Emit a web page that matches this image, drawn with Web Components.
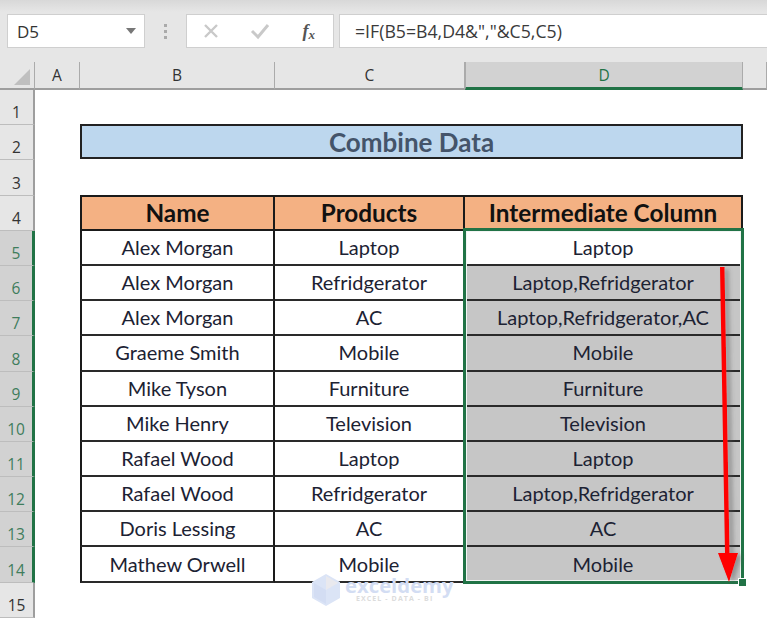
<!DOCTYPE html>
<html>
<head>
<meta charset="utf-8">
<style>
    html, body { margin: 0; padding: 0; background: #fff; }
    body { width: 767px; height: 621px; overflow: hidden; font-family: "Lato", "Liberation Sans", sans-serif; }
</style>
</head>
<body>
    <xl-app></xl-app>

    <template id="toolbarTpl">
        <style>
            :host { display: flex; height: 62px; box-sizing: border-box; padding: 14px 0 14px 7px; align-items: stretch;
                background: linear-gradient(#d8d8d8 0, #e6e6e6 12px); font-family: "Open Sans", "Liberation Sans", sans-serif; color: #333; }
            .box { background: #fff; border: 1px solid #cfcfcf; box-sizing: border-box; display: flex; align-items: center; }
            .name { width: 138px; padding: 0 8px 0 9px; justify-content: space-between; font-size: 17px; }
            .caret { width: 0; height: 0; border: 5px solid transparent; border-top: 6px solid #777; border-bottom: 0; }
            .dots { width: 41px; display: flex; flex-direction: column; align-items: center; justify-content: center; gap: 3px; }
            .dots i { width: 3px; height: 3px; background: #aaa; }
            .ctl { width: 148px; }
            .ctl span { width: 50px; display: flex; justify-content: center; }
            .fx { font: italic 700 18px "Liberation Serif", serif; color: #555; align-items: baseline; }
            .fx small { font-size: 13px; position: relative; top: 2px; }
            .formula { flex: 1; margin-left: 5px; padding-left: 15px; border-right: 0; font-size: 17.7px; color: #3a3a3a; }
        </style>
        <div class="box name"><slot name="cell"></slot><div class="caret"></div></div>
        <div class="dots"><i></i><i></i><i></i></div>
        <div class="box ctl">
            <span><svg width="18" height="18" viewBox="0 0 18 18"><path d="M3 3 15 15M15 3 3 15" stroke="#c9c9c9" stroke-width="2.4" fill="none"/></svg></span>
            <span><svg width="20" height="18" viewBox="0 0 20 18"><path d="M2 9 8 15 18 3" stroke="#c9c9c9" stroke-width="3" fill="none"/></svg></span>
            <span class="fx">f<small>x</small></span>
        </div>
        <div class="box formula"><slot name="formula"></slot></div>
    </template>

    <template id="cellTpl">
        <style>
            :host { display: flex; align-items: center; justify-content: center; box-sizing: border-box; min-width: 0;
                font-size: 20px; line-height: 22px; color: #1c2233; white-space: nowrap; }
            :host([kind=blank]) { background: #fff; }
            :host([kind=data]), :host([kind=white]) { background: #fff; border-right: 2px solid #1a1a1a; border-bottom: 2px solid #2a2a2a; padding-bottom: 1px; }
            :host([kind=fill]) { background: #c6c6c6; border-right: 2px solid #1a1a1a; border-bottom: 2px solid #2a2a2a; padding-bottom: 1px; }
            :host([kind=head]) { background: #f4b183; border-right: 2px solid #1a1a1a; border-bottom: 2px solid #1a1a1a; border-top: 2px solid #1a1a1a;
                margin-top: -1px; font-weight: 700; font-size: 24.3px; color: #111; }
            :host([kind=title]) { background: #bdd7ee; border: 2px solid #222; margin: -1px 0 1px; font-weight: 700; font-size: 26px; color: #44546a; }
            :host([left]) { border-left: 2px solid #1a1a1a; }
        </style>
        <slot></slot>
    </template>

    <template id="headTpl">
        <style>
            :host { display: flex; align-items: center; justify-content: center; box-sizing: border-box; background: #e6e6e6;
                font-family: "Open Sans", "Liberation Sans", sans-serif; font-size: 15.5px; color: #333; }
            :host([axis=col]) { border-right: 1px solid #ababab; border-bottom: 2px solid #9e9e9e; }
            :host([axis=row]) { border-right: 2px solid #9e9e9e; border-bottom: 1px solid #bdbdbd; align-items: flex-end; padding-bottom: 1px; }
            :host([axis=col][on]) { background: #d2d2d2; color: #217346; border-bottom: 3px solid #217346; border-left: 1px solid #ababab; }
            :host([axis=row][on]) { background: #d2d2d2; color: #3f7d5c; border-right: 3px solid #217346; }
        </style>
        <slot></slot>
    </template>

    <template id="overlayTpl">
        <style>
            :host { display: block; position: absolute; left: 0; top: 0; width: 767px; height: 559px; pointer-events: none; }
            .sel { position: absolute; left: 463px; top: 166px; width: 281px; height: 356px; box-sizing: border-box;
                border: 3px solid #217346; box-shadow: inset 0 0 0 1px #f4f4f4; }
            .handle { position: absolute; left: 738px; top: 516px; width: 9px; height: 9px; box-sizing: border-box; background: #217346; border: 1px solid #fff; }
            .arrow { position: absolute; left: 700px; top: 205px; overflow: visible; }
            .mark { position: absolute; left: 312px; top: 512px; display: flex; gap: 5px; align-items: flex-start; }
            .word { font: 700 20.3px/18px "Open Sans", "Liberation Sans", sans-serif; color: #d3ddf3; margin-top: 2px; }
            .sub { font: 700 7px/8px "Open Sans", "Liberation Sans", sans-serif; color: #dcdcdc; letter-spacing: 1.1px; padding-left: 11px; margin-top: 1px; }
        </style>
        <div class="sel"></div>
        <svg class="arrow" width="50" height="320" viewBox="0 0 50 320">
            <defs><filter id="sh" x="-50%" y="-5%" width="200%" height="110%"><feDropShadow dx="4" dy="2" stdDeviation="2" flood-color="#555" flood-opacity=".45"/></filter></defs>
            <path filter="url(#sh)" d="M20 0 24.5 0 29.5 286 38 286 29 315 18 286 25 286Z" fill="#ff0000"/>
        </svg>
        <div class="handle"></div>
        <div class="mark">
            <svg width="28" height="32" viewBox="0 0 28 32"><path d="M14 0 28 8 28 24 14 32 0 24 0 8Z" fill="#dbe4f6"/><path d="M14 2 26 9 14 16Z" fill="#e9e9ee"/><path d="M14 16 14 30 2 23 2 9Z" fill="#d3ddf3"/></svg>
            <div>
                <div class="word">exceldemy</div>
                <div class="sub">EXCEL - DATA - BI</div>
            </div>
        </div>
    </template>

    <script>
        function mount(el, id) {
            el.attachShadow({ mode: "open" }).appendChild(document.getElementById(id).content.cloneNode(true));
        }

        class XlToolbar extends HTMLElement {
            constructor() { super(); mount(this, "toolbarTpl"); }
        }
        class XlCell extends HTMLElement {
            constructor() { super(); mount(this, "cellTpl"); }
        }
        class XlHead extends HTMLElement {
            constructor() { super(); mount(this, "headTpl"); }
        }
        class XlOverlay extends HTMLElement {
            constructor() { super(); mount(this, "overlayTpl"); }
        }

        const people = [
            ["Alex Morgan", "Laptop", "Laptop"],
            ["Alex Morgan", "Refridgerator", "Laptop,Refridgerator"],
            ["Alex Morgan", "AC", "Laptop,Refridgerator,AC"],
            ["Graeme Smith", "Mobile", "Mobile"],
            ["Mike Tyson", "Furniture", "Furniture"],
            ["Mike Henry", "Television", "Television"],
            ["Rafael Wood", "Laptop", "Laptop"],
            ["Rafael Wood", "Refridgerator", "Laptop,Refridgerator"],
            ["Doris Lessing", "AC", "AC"],
            ["Mathew Orwell", "Mobile", "Mobile"]
        ];

        class XlSheet extends HTMLElement {
            constructor() {
                super();
                const root = this.attachShadow({ mode: "open" });
                root.innerHTML = `<style>
                    :host { display: block; position: relative; height: 559px; overflow: hidden; }
                    .grid { display: grid; grid-template-columns: 35px 45px 195px 190px 278px 24px;
                        grid-template-rows: 28px repeat(15, 35.2px); }
                </style><div class="grid"></div><xl-overlay></xl-overlay>`;
                const grid = root.querySelector(".grid");

                const add = (tag, attrs, text, span) => {
                    const n = document.createElement(tag);
                    for (const k in attrs) n.setAttribute(k, attrs[k]);
                    if (text) n.textContent = text;
                    if (span) n.style.gridColumn = "span " + span;
                    grid.appendChild(n);
                };

                // corner
                const corner = document.createElement("xl-head");
                corner.setAttribute("axis", "col");
                corner.innerHTML = '<svg width="17" height="17" viewBox="0 0 17 17" style="margin:5px 0 0 11px"><path d="M16 0V16H0Z" fill="#bfbfbf"/></svg>';
                grid.appendChild(corner);
                add("xl-head", { axis: "col" }, "A");
                add("xl-head", { axis: "col" }, "B");
                add("xl-head", { axis: "col" }, "C");
                add("xl-head", { axis: "col", on: "" }, "D");
                add("xl-head", { axis: "col" });

                for (let r = 1; r <= 15; r++) {
                    const row = r >= 5 && r <= 14;
                    add("xl-head", row ? { axis: "row", on: "" } : { axis: "row" }, String(r));
                    add("xl-cell", { kind: "blank" });
                    if (r === 2) {
                        add("xl-cell", { kind: "title" }, "Combine Data", 3);
                    } else if (r === 4) {
                        add("xl-cell", { kind: "head", left: "" }, "Name");
                        add("xl-cell", { kind: "head" }, "Products");
                        add("xl-cell", { kind: "head" }, "Intermediate Column");
                    } else if (row) {
                        const d = people[r - 5];
                        add("xl-cell", { kind: "data", left: "" }, d[0]);
                        add("xl-cell", { kind: "data" }, d[1]);
                        add("xl-cell", { kind: r === 5 ? "white" : "fill" }, d[2]);
                    } else {
                        add("xl-cell", { kind: "blank" });
                        add("xl-cell", { kind: "blank" });
                        add("xl-cell", { kind: "blank" });
                    }
                    add("xl-cell", { kind: "blank" });
                }
            }
        }

        class XlApp extends HTMLElement {
            constructor() {
                super();
                this.attachShadow({ mode: "open" }).innerHTML = `<style>
                    :host { display: block; width: 767px; height: 621px; overflow: hidden; }
                </style>
                <xl-toolbar><span slot="cell">D5</span><span slot="formula">=IF(B5=B4,D4&amp;","&amp;C5,C5)</span></xl-toolbar>
                <xl-sheet></xl-sheet>`;
            }
        }

        customElements.define("xl-toolbar", XlToolbar);
        customElements.define("xl-cell", XlCell);
        customElements.define("xl-head", XlHead);
        customElements.define("xl-overlay", XlOverlay);
        customElements.define("xl-sheet", XlSheet);
        customElements.define("xl-app", XlApp);
    </script>
</body>
</html>
